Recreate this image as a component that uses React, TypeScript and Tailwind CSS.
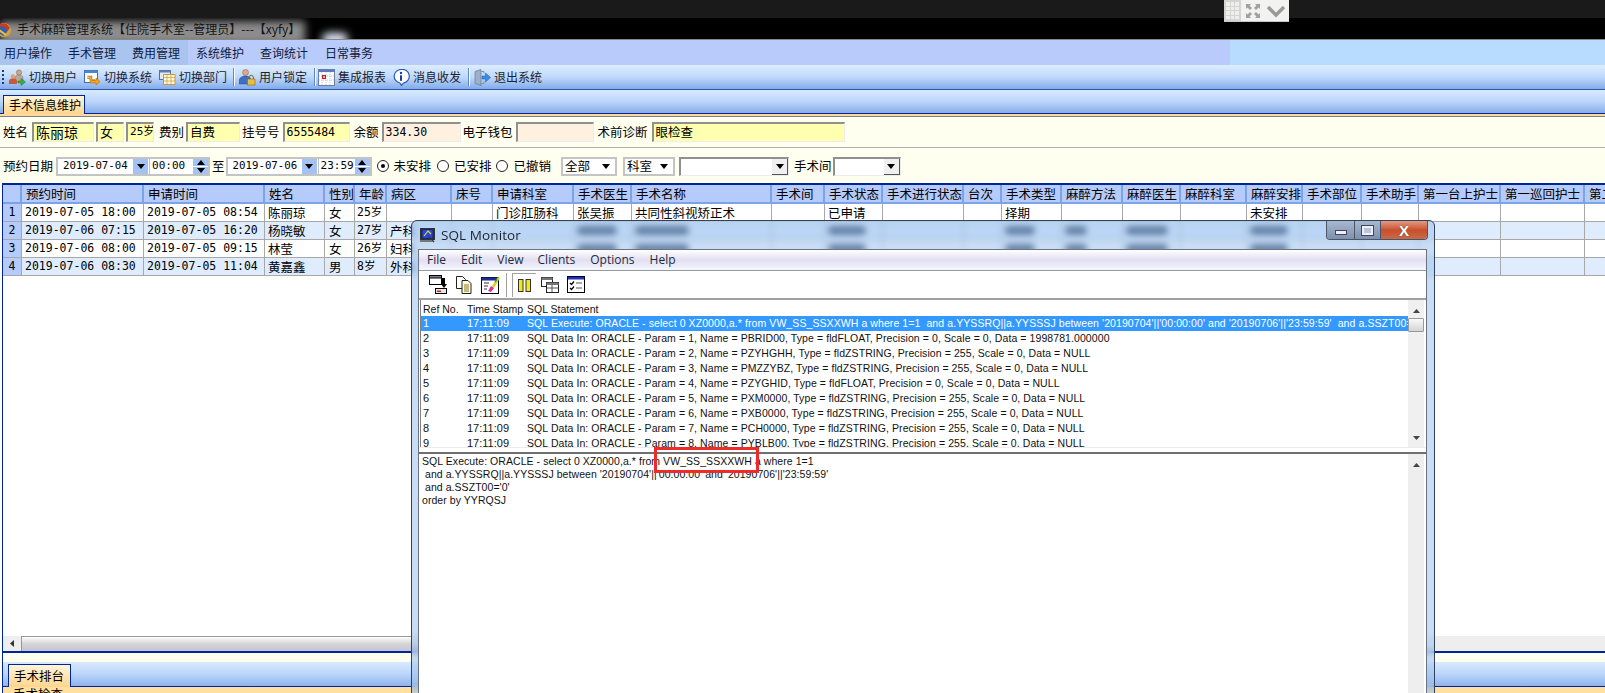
import React from "react";

const cjk = "font-['Noto_Sans_CJK_SC','Liberation_Sans',sans-serif]";
const mono = "font-['DejaVu_Sans_Mono','Noto_Sans_CJK_SC',monospace]";
const cols =
  "grid grid-cols-[19px_122px_121px_60px_30px_32px_65px_41px_81px_58px_140px_53px_58px_81px_38px_60px_61px_58px_66px_56px_59px_57px_82px_84px_60px]";

const headers = ["", "预约时间", "申请时间", "姓名", "性别", "年龄", "病区", "床号", "申请科室", "手术医生", "手术名称", "手术间", "手术状态", "手术进行状态", "台次", "手术类型", "麻醉方法", "麻醉医生", "麻醉科室", "麻醉安排", "手术部位", "手术助手", "第一台上护士", "第一巡回护士", "第二台上护士"];

const rows = [
  { n: "1", a: "2019-07-05 18:00", b: "2019-07-05 08:54", name: "陈丽琼", sex: "女", age: "25岁", ward: "", bg: "bg-white" },
  { n: "2", a: "2019-07-06 07:15", b: "2019-07-05 16:20", name: "杨晓敏", sex: "女", age: "27岁", ward: "产科", bg: "bg-[#deecfd]" },
  { n: "3", a: "2019-07-06 08:00", b: "2019-07-05 09:15", name: "林莹", sex: "女", age: "26岁", ward: "妇科", bg: "bg-white" },
  { n: "4", a: "2019-07-06 08:30", b: "2019-07-05 11:04", name: "黄嘉鑫", sex: "男", age: "8岁", ward: "外科", bg: "bg-[#deecfd]" },
];

const blobs: Record<number, number> = { 9: 40, 10: 54, 12: 38, 15: 30, 16: 22, 17: 42, 19: 38 };

function Cell({ children, className = "" }: { children?: React.ReactNode; className?: string }) {
  return <div className={`h-[18px] border-r border-b border-[#a8a8a8] overflow-hidden whitespace-nowrap pl-[3px] leading-[17px] ${className}`}>{children}</div>;
}

function Row({ r }: { r: (typeof rows)[number] }) {
  const empties = Array.from({ length: 18 }, (_, i) => i + 7);
  return (
    <div className={`${cols} ${r.bg} w-[1700px]`}>
      <Cell className={`bg-[#b5cbfb] text-center !pl-0 ${mono} text-[11.5px]`}>{r.n}</Cell>
      <Cell className={`${mono} text-[11.5px]`}>{r.a}</Cell>
      <Cell className={`${mono} text-[11.5px]`}>{r.b}</Cell>
      <Cell className="text-[12.5px]">{r.name}</Cell>
      <Cell className="text-[12.5px] pl-[4px]">{r.sex}</Cell>
      <Cell className={`${mono} text-[11.5px] !pl-[2px]`}>{r.age}</Cell>
      <Cell className="text-[12.5px]">{r.ward}</Cell>
      {empties.map((i) => {
        if (r.n === "1") {
          const t: Record<number, string> = { 8: "门诊肛肠科", 9: "张吴振", 10: "共同性斜视矫正术", 12: "已申请", 15: "择期", 19: "未安排" };
          return <Cell key={i} className="text-[12.5px]">{t[i]}</Cell>;
        }
        const w = r.n === "2" || r.n === "3" ? blobs[i] : undefined;
        return (
          <Cell key={i}>
            {w ? <div className="mt-[4px] h-[9px] rounded-full bg-[#1f3250]" style={{ width: w }} /> : null}
          </Cell>
        );
      })}
    </div>
  );
}

function Input({ className = "", tone = "bg-[#ffffb0]", children }: { className?: string; tone?: string; children?: React.ReactNode }) {
  return (
    <div className={`h-[20px] border-t-2 border-l-2 border-t-[#909090] border-l-[#909090] border-r border-b border-r-[#ececec] border-b-[#ececec] pl-[2px] leading-[16px] overflow-hidden whitespace-nowrap ${tone} ${className}`}>
      {children}
    </div>
  );
}

function Tri({ up = false, color = "#000" }: { up?: boolean; color?: string }) {
  return (
    <svg width="8" height="5" viewBox="0 0 8 5" className="block">
      <path d={up ? "M4 0L8 5H0z" : "M0 0h8L4 5z"} fill={color} />
    </svg>
  );
}

function DateBox({ d, className }: { d: string; className: string }) {
  return (
    <div className={`h-[19px] border-2 border-r-0 border-[#c4c4c4] bg-white flex items-center pl-[5px] justify-between ${className}`}>
      <span className={`${mono} text-[10.75px]`}>{d}</span>
      <span className="w-[15px] h-[15px] bg-[#a4c2f4] flex items-center justify-center mr-[1px]"><Tri /></span>
    </div>
  );
}

function TimeBox({ t, className }: { t: string; className: string }) {
  return (
    <div className={`h-[19px] border-2 border-l border-[#c4c4c4] bg-white flex items-center pl-[2px] justify-between ${className}`}>
      <span className={`${mono} text-[11px]`}>{t}</span>
      <span className="w-[15px] h-[15px] flex flex-col gap-[1px]">
        <span className="h-[7px] bg-[#a4c2f4] flex items-center justify-center"><Tri up /></span>
        <span className="h-[7px] bg-[#a4c2f4] flex items-center justify-center"><Tri /></span>
      </span>
    </div>
  );
}

function Radio({ on = false }: { on?: boolean }) {
  return (
    <span className="w-[12px] h-[12px] rounded-full border border-[#222] bg-white flex items-center justify-center shrink-0">
      {on ? <span className="w-[4px] h-[4px] rounded-full bg-black" /> : null}
    </span>
  );
}

function SelectBox({ text, className }: { text?: string; className: string }) {
  return (
    <div className={`h-[19px] border-2 border-[#c4c4c4] bg-white flex items-center justify-between pl-[2px] pr-[5px] text-[12.5px] ${className}`}>
      <span>{text}</span>
      <Tri />
    </div>
  );
}

function ComboBox({ className }: { className: string }) {
  return (
    <div className={`h-[19px] border-t-2 border-l-2 border-[#909090] border-r border-b border-r-[#ececec] border-b-[#ececec] bg-white flex justify-end ${className}`}>
      <span className="w-[16px] h-full bg-[#f0f0f0] border-r border-b border-[#555] flex items-center justify-center"><Tri /></span>
    </div>
  );
}

const IconTitle = () => (
  <svg width="13" height="16" viewBox="0 0 13 16" className="shrink-0">
    <circle cx="4" cy="9" r="7" fill="#d9a03a" />
    <path d="M-2 6C2 3 6 4 9 8L4 15-2 12z" fill="#2c5fb8" />
    <path d="M0 3C4 1 8 3 10 7L7 9C5 6 3 5 0 6z" fill="#c83a22" />
    <path d="M-1 9L6 14" stroke="#e8c040" strokeWidth="2" />
  </svg>
);

const I = { w: 17, h: 17, vb: "0 0 17 17" };
const TbUser = () => (
  <svg width={I.w} height={I.h} viewBox={I.vb} className="shrink-0">
    <circle cx="10" cy="3.5" r="2.6" fill="#c9a98a" stroke="#8b6a55" strokeWidth=".6" />
    <path d="M6 13V9c0-2 2-3 4-3s4 1 4 3v3z" fill="#b9a8a0" stroke="#8a7570" strokeWidth=".6" />
    <circle cx="4" cy="7.5" r="2.2" fill="#e0a070" />
    <path d="M0 15v-3c0-2 2-2.5 4-2.5s4 .5 4 2.5v3z" fill="#c8593f" />
    <path d="M9 12h3V9.5l4.5 3.5-4.5 3.500V14H9z" fill="#3caf3c" stroke="#1f7a1f" strokeWidth=".5" />
  </svg>
);
const TbSys = () => (
  <svg width={I.w} height={I.h} viewBox={I.vb} className="shrink-0">
    <rect x=".5" y="1.500" width="13" height="12" fill="#fff" stroke="#3a6fc0" />
    <rect x=".5" y="1.500" width="13" height="2.500" fill="#4a86d8" />
    <path d="M3 7h5v4h3l-2 0M8 11h4v-2l4 3.500-4 3.500v-2H6V9H3z" fill="#f2a11f" stroke="#a8650d" strokeWidth=".5" />
  </svg>
);
const TbDept = () => (
  <svg width={I.w} height={I.h} viewBox={I.vb} className="shrink-0">
    <rect x=".5" y="1.500" width="11" height="9" fill="#dfe8f4" stroke="#5a6f90" />
    <rect x="4.500" y="5.500" width="11.500" height="10" fill="#fff7dc" stroke="#c79b3c" />
    <path d="M4.500 8.500h11.500M8 5.500v10M12 5.500v10M4.500 12h11.500" stroke="#c79b3c" strokeWidth=".7" />
    <rect x=".5" y="1.500" width="11" height="2" fill="#5a7fb5" />
  </svg>
);
const TbLock = () => (
  <svg width={I.w} height={I.h} viewBox={I.vb} className="shrink-0">
    <circle cx="6.500" cy="3.500" r="3" fill="#e0a88a" stroke="#8a5a45" strokeWidth=".5" />
    <path d="M0 15v-3c0-3 3-5 6.500-5S12 9 12 12v3z" fill="#3f6fc2" stroke="#26488a" strokeWidth=".5" />
    <path d="M10 10V8.500a2.200 2.200 0 0 1 4.400 0V10" fill="none" stroke="#7a6a30" />
    <rect x="8.500" y="10" width="7.500" height="6" fill="#e9bd42" stroke="#8a6a18" strokeWidth=".6" />
  </svg>
);
const TbReport = () => (
  <svg width={I.w} height={I.h} viewBox={I.vb} className="shrink-0">
    <rect x=".5" y=".5" width="16" height="16" fill="#fff" stroke="#6a7fa8" />
    <rect x=".5" y=".5" width="16" height="2.500" fill="#5d7db8" />
    <path d="M4 3v13M8 3v13M12 3v13M1 7h15M1 11h15" stroke="#a8b8dc" strokeWidth=".8" strokeDasharray="1 1" />
    <rect x="4" y="6" width="4" height="4" fill="#b8232a" />
    <rect x="5.200" y="7.200" width="1.600" height="1.600" fill="#fff" />
  </svg>
);
const TbInfo = () => (
  <svg width={I.w} height={I.h} viewBox={I.vb} className="shrink-0">
    <path d="M8 .5a7 6.800 0 0 1 2.500 13.500L8.500 16.500 7 14A7 6.800 0 0 1 8 .5z" fill="#fff" stroke="#2a58c0" strokeWidth="1.200" />
    <circle cx="8" cy="4" r="1.200" fill="#123f9c" />
    <rect x="7" y="6.300" width="2" height="5.500" fill="#123f9c" />
  </svg>
);
const TbExit = () => (
  <svg width={I.w} height={I.h} viewBox={I.vb} className="shrink-0">
    <path d="M1 2.500L7 .5v16l-6-2z" fill="#9db0c8" stroke="#5f6f85" strokeWidth=".6" />
    <path d="M7 2.500h3v2M7 14.500h3v-2" fill="none" stroke="#8a8f98" />
    <path d="M8 7h3.500V4l5 4.500-5 4.500v-3H8z" fill="#3b8be6" stroke="#1b59aa" strokeWidth=".5" />
  </svg>
);

function Sep({ className = "" }: { className?: string }) {
  return <span className={`w-[1px] h-[18px] bg-[#5f86bd] border-r border-white box-content ${className}`} />;
}

function Tool({ icon, text, className }: { icon: React.ReactNode; text: string; className: string }) {
  return (
    <div className={`flex items-center gap-[3px] ${className}`}>
      {icon}
      <span>{text}</span>
    </div>
  );
}

const WinIcon = () => (
  <svg width="16" height="15" viewBox="0 0 16 15" className="shrink-0">
    <rect x=".5" y=".5" width="14" height="11" fill="#182a66" stroke="#333" />
    <rect x="2.500" y="2" width="10" height="8" fill="#2b45d6" />
    <path d="M4 8l4-5 3 3" stroke="#e0d040" strokeWidth="1.200" fill="none" />
    <path d="M9 9l5 5" stroke="#333" strokeWidth="1.500" />
    <rect x="0" y="12" width="12" height="2" fill="#777" />
  </svg>
);

const St1 = () => (
  <svg width="19" height="19" viewBox="0 0 19 19" className="shrink-0">
    <rect x=".5" y=".5" width="12" height="9" fill="#fff" stroke="#000" />
    <rect x=".5" y=".5" width="12" height="2.500" fill="#7b7f9a" stroke="#000" />
    <rect x="6.500" y="13.500" width="11" height="5" fill="#e8e8e8" stroke="#000" />
    <rect x="8" y="15.500" width="4" height="1.500" fill="#d02020" />
    <path d="M13 3h3v6h2l-3 4-3-4h1z" fill="#000" />
  </svg>
);
const St2 = () => (
  <svg width="16" height="18" viewBox="0 0 16 18" className="shrink-0">
    <path d="M.5 .5h6l3 3v9h-9z" fill="#fff" stroke="#222" />
    <path d="M6 4.500h6l3 3v10H6z" fill="#fffbe0" stroke="#222" />
    <path d="M8 9h5M8 11h5M8 13h5M8 15h5" stroke="#8a7a20" />
  </svg>
);
const St3 = () => (
  <svg width="19" height="18" viewBox="0 0 19 18" className="shrink-0">
    <rect x=".5" y="1.500" width="17" height="16" fill="#fff" stroke="#000" />
    <rect x=".5" y="1.500" width="17" height="3" fill="#202a90" />
    <path d="M3 7h5M3 10h4M3 13h3" stroke="#333" />
    <path d="M7 15l3-5 3 2-3 4z" fill="#e82aa0" />
    <path d="M11 10l6-9 2 1-6 10z" fill="#d8d020" />
    <path d="M14 6l2-3" stroke="#2aa050" strokeWidth="1.500" />
  </svg>
);
const StPause = () => (
  <svg width="13" height="13" viewBox="0 0 13 13" className="shrink-0">
    <rect x=".5" y=".5" width="4.500" height="12" fill="#f4e814" stroke="#333" />
    <rect x="8" y=".5" width="4.500" height="12" fill="#f4e814" stroke="#333" />
  </svg>
);
const St5 = () => (
  <svg width="18" height="16" viewBox="0 0 18 16" className="shrink-0">
    <rect x=".5" y=".5" width="11" height="9" fill="#fff" stroke="#222" />
    <rect x=".5" y=".5" width="11" height="2.500" fill="#777" />
    <rect x="5.500" y="5.500" width="12" height="10" fill="#fff" stroke="#222" />
    <rect x="5.500" y="5.500" width="12" height="2.500" fill="#777" />
    <path d="M6 11h11M11 8v7" stroke="#555" />
  </svg>
);
const St6 = () => (
  <svg width="18" height="17" viewBox="0 0 18 17" className="shrink-0">
    <rect x=".5" y=".5" width="17" height="16" fill="#fff" stroke="#000" />
    <rect x="1" y="1" width="16" height="2.500" fill="#2030c0" />
    <path d="M3 7l1.500 1.500L7 5.500M3 12l1.500 1.500L7 10.500" stroke="#000" fill="none" strokeWidth="1.200" />
    <path d="M9 7h6M9 12h6" stroke="#555" />
  </svg>
);

const sqlRows: [string, string][] = [
  ["1", "SQL Execute: ORACLE - select 0 XZ0000,a.* from VW_SS_SSXXWH a where 1=1  and a.YYSSRQ||a.YYSSSJ between '20190704'||'00:00:00' and '20190706'||'23:59:59'  and a.SSZT00='0'"],
  ["2", "SQL Data In: ORACLE - Param = 1, Name = PBRID00, Type = fldFLOAT, Precision = 0, Scale = 0, Data = 1998781.000000"],
  ["3", "SQL Data In: ORACLE - Param = 2, Name = PZYHGHH, Type = fldZSTRING, Precision = 255, Scale = 0, Data = NULL"],
  ["4", "SQL Data In: ORACLE - Param = 3, Name = PMZZYBZ, Type = fldZSTRING, Precision = 255, Scale = 0, Data = NULL"],
  ["5", "SQL Data In: ORACLE - Param = 4, Name = PZYGHID, Type = fldFLOAT, Precision = 0, Scale = 0, Data = NULL"],
  ["6", "SQL Data In: ORACLE - Param = 5, Name = PXM0000, Type = fldZSTRING, Precision = 255, Scale = 0, Data = NULL"],
  ["7", "SQL Data In: ORACLE - Param = 6, Name = PXB0000, Type = fldZSTRING, Precision = 255, Scale = 0, Data = NULL"],
  ["8", "SQL Data In: ORACLE - Param = 7, Name = PCH0000, Type = fldZSTRING, Precision = 255, Scale = 0, Data = NULL"],
  ["9", "SQL Data In: ORACLE - Param = 8, Name = PYBLB00, Type = fldZSTRING, Precision = 255, Scale = 0, Data = NULL"],
];

function Menu() {
  return (
    <div className="h-[21px] flex items-center text-[12px] text-[#1c2a40] font-['Open_Sans',sans-serif] bg-linear-to-b from-white via-[#e2dff2] to-[#f4f8ff] border-b border-[#999]">
      <span className="ml-[8px]">File</span>
      <span className="ml-[15px]">Edit</span>
      <span className="ml-[15px]">View</span>
      <span className="ml-[14px]">Clients</span>
      <span className="ml-[15px]">Options</span>
      <span className="ml-[15px]">Help</span>
    </div>
  );
}

function ScrollArrow({ up = false }: { up?: boolean }) {
  return (
    <svg width="7" height="4" viewBox="0 0 7 4" className="block mx-auto">
      <path d={up ? "M3.500 0L7 4H0z" : "M0 0h7L3.500 4z"} fill="#444" />
    </svg>
  );
}

function SqlWindow() {
  return (
    <div className="absolute left-[411px] top-[220px] w-[1024px] h-[490px] rounded-t-[6px] border border-[#33405a] bg-[#9cc2ee]/55 backdrop-blur-[3px] flex flex-col">
      <div className="h-[28px] shrink-0 relative flex items-center pl-[8px] gap-[5px]">
        <WinIcon />
        <span className="text-[13.500px] text-[#1b2230] font-['Open_Sans',sans-serif] tracking-[0.1px]">SQL Monitor</span>
        <div className="absolute right-[6px] top-0 h-[19px] w-[102px] flex border border-t-0 border-[#4a5568] rounded-b-[4px] overflow-hidden">
          <div className="w-[28px] bg-linear-to-b from-[#a8b8d0] to-[#7d90ae] border-r border-[#4a5568] flex items-center justify-center">
            <span className="w-[12px] h-[5px] mt-[4px] bg-[#eef] border border-[#445]" />
          </div>
          <div className="w-[26px] bg-linear-to-b from-[#a8b8d0] to-[#7d90ae] border-r border-[#4a5568] flex items-center justify-center">
            <span className="w-[11px] h-[9px] bg-[#b8c8dc] border-2 border-[#eef] outline outline-[#445]" />
          </div>
          <div className="flex-1 bg-linear-to-b from-[#e39a84] via-[#c8502a] to-[#c66a48] flex items-center justify-center">
            <span className="text-white text-[15px] font-bold leading-none font-['Liberation_Sans',sans-serif] [text-shadow:0_0_1px_#333]">X</span>
          </div>
        </div>
      </div>
      <div className="ml-[6px] mr-[7px] flex-1 bg-white border-t border-x border-[#6b7280] flex flex-col min-h-0">
        <Menu />
        <div className="h-[29px] shrink-0 flex items-center relative border-b-2 border-[#a0a0a0]">
          <span className="ml-[10px]"><St1 /></span>
          <span className="ml-[8px]"><St2 /></span>
          <span className="ml-[9px]"><St3 /></span>
          <span className="ml-[6px] w-[2px] h-[24px] border-l border-[#a0a0a0] border-r border-r-white" />
          <span className="ml-[4px] w-[24px] h-[24px] border-t border-l border-[#a0a0a0] flex items-center justify-center"><StPause /></span>
          <span className="ml-[5px]"><St5 /></span>
          <span className="ml-[8px]"><St6 /></span>
        </div>
        <div className="h-[147px] shrink-0 relative overflow-hidden ml-[1px] border-l border-[#808080] font-['Liberation_Sans',sans-serif] text-[10.500px] text-[#111]">
          <div className="h-[16px] flex items-end pb-[1px] pl-[2px] leading-[12px]">
            <span className="w-[44px]">Ref No.</span>
            <span className="w-[60px]">Time Stamp</span>
            <span>SQL Statement</span>
          </div>
          {sqlRows.map(([n, t]) => (
            <div key={n} className={`h-[15px] w-[988px] flex items-center pl-[2px] overflow-hidden whitespace-pre ${n === "1" ? "bg-[#3399ff] text-white" : ""}`}>
              <span className="w-[44px] shrink-0 text-[11px]">{n}</span>
              <span className="w-[60px] shrink-0 text-[11px]">17:11:09</span>
              <span className="text-[10.500px] tracking-[0.085px]">{t}</span>
            </div>
          ))}
          <div className="absolute right-[2px] top-[0] bottom-0 w-[16px] bg-[#f0f0f0] pt-[9px] flex flex-col">
            <ScrollArrow up />
            <div className="h-[14px] mt-[5px] bg-linear-to-b from-[#fafafa] to-[#d4d4d4] border border-[#999] rounded-[1px]" />
            <div className="mt-auto mb-[7px]"><ScrollArrow /></div>
          </div>
        </div>
        <div className="h-[7px] shrink-0 border-t border-[#ececec] border-b-2 border-b-[#707070]" />
        <div className="flex-1 relative font-['Liberation_Sans',sans-serif] text-[10.500px] text-[#111] pl-[3px] pt-[1px] leading-[13px] tracking-[0.06px] whitespace-pre">
          <div>SQL Execute: ORACLE - select 0 XZ0000,a.* from VW_SS_SSXXWH a where 1=1</div>
          <div> and a.YYSSRQ||a.YYSSSJ between '20190704'||'00:00:00' and '20190706'||'23:59:59'</div>
          <div> and a.SSZT00='0'</div>
          <div>order by YYRQSJ</div>
          <div className="absolute right-[2px] top-0 bottom-0 w-[16px] bg-[#eeeeee] pt-[9px]">
            <ScrollArrow up />
          </div>
        </div>
      </div>
    </div>
  );
}

export default function App() {
  return (
    <div className={`relative w-[1605px] h-[693px] overflow-hidden bg-white text-black flex flex-col ${cjk} text-[12px]`}>
      <div className="h-[18px] shrink-0 bg-[#1a1a1a]" />
      <div className="h-[22px] shrink-0 bg-black relative overflow-hidden border-b border-[#888] flex items-center">
        <div className="absolute left-0 top-[3px] w-[305px] h-[24px] bg-[#8c8c8c] blur-[4px]" />
        <div className="absolute left-[322px] top-[15px] w-[26px] h-[12px] rounded-full bg-[#e8f0ff] blur-[4px]" />
        <div className="relative flex items-center">
          <IconTitle />
          <span className="ml-[4px] text-[12px] text-[#141414] whitespace-nowrap">手术麻醉管理系统【住院手术室--管理员】---【xyfy】</span>
        </div>
      </div>
      <div className="h-[25px] shrink-0 bg-[#b8dcff] relative flex items-center text-[12px] text-[#10203a]">
        <div className="absolute left-0 top-0 bottom-0 w-[1230px] bg-[#b8cbfb]" />
        <div className="absolute left-0 top-0 bottom-0 w-[188px] bg-[#a9c5ef]" />
        <span className="relative ml-[4px]">用户操作</span>
        <span className="relative ml-[16px]">手术管理</span>
        <span className="relative ml-[16px]">费用管理</span>
        <span className="relative ml-[16px]">系统维护</span>
        <span className="relative ml-[16px]">查询统计</span>
        <span className="relative ml-[17px]">日常事务</span>
      </div>
      <div className="h-[25px] shrink-0 bg-linear-to-b from-[#dcedff] via-[#c0d9fc] to-[#82abe9] border-b border-[#2c5aa8] flex items-center text-[12px] text-[#1a2230]">
        <span className="ml-[2px] w-[2px] h-[14px] border-l-2 border-dotted border-[#1e3a70]" />
        <Tool icon={<TbUser />} text="切换用户" className="ml-[5px]" />
        <Tool icon={<TbSys />} text="切换系统" className="ml-[7px]" />
        <Tool icon={<TbDept />} text="切换部门" className="ml-[7px]" />
        <Sep className="ml-[6px]" />
        <Tool icon={<TbLock />} text="用户锁定" className="ml-[4px]" />
        <Sep className="ml-[7px]" />
        <Tool icon={<TbReport />} text="集成报表" className="ml-[2px]" />
        <Tool icon={<TbInfo />} text="消息收发" className="ml-[7px]" />
        <Sep className="ml-[7px]" />
        <Tool icon={<TbExit />} text="退出系统" className="ml-[4px]" />
      </div>
      <div className="h-[24px] shrink-0 bg-linear-to-b from-[#d8eaff] via-[#bcd5fb] to-[#86aeea] border-b border-[#00249c] flex items-end pl-[3px]">
        <div className="w-[82px] h-[19px] -mb-[1px] border border-b-0 border-[#00249c] bg-linear-to-b from-[#fff6d8] to-[#ffd48c] flex items-center pl-[5px] text-[12px]">手术信息维护</div>
      </div>
      <div className="h-[3px] shrink-0 bg-[#ffd9a0] border-b border-[#808080]" />
      <div className="h-[31px] shrink-0 bg-[#fffff0] border-b border-[#b0b0b0] flex items-center text-[12.500px] pl-[3px]">
        <span>姓名</span>
        <Input className="ml-[4px] w-[62px] text-[14px]">陈丽琼</Input>
        <Input className="ml-[2px] w-[28px] text-[13px]">女</Input>
        <Input className={`ml-[2px] w-[28px] text-[11px] ${mono}`}>25岁</Input>
        <span className="ml-[5px]">费别</span>
        <Input className="ml-[2px] w-[54px] text-[12.500px]">自费</Input>
        <span className="ml-[2px]">挂号号</span>
        <Input className={`ml-[3px] w-[67px] text-[11.500px] ${mono}`}>6555484</Input>
        <span className="ml-[4px]">余额</span>
        <Input tone="bg-[#fff0e0]" className={`ml-[3px] w-[79px] text-[11.500px] ${mono}`}>334.30</Input>
        <span className="ml-[2px]">电子钱包</span>
        <Input tone="bg-[#fff0e0]" className="ml-[3px] w-[78px]" />
        <span className="ml-[4px]">术前诊断</span>
        <Input className="ml-[4px] w-[193px] text-[12.500px]">眼检查</Input>
      </div>
      <div className="h-[35px] shrink-0 bg-[#fffff0] flex items-center text-[12.500px] pl-[3px] pt-[1px]">
        <span>预约日期</span>
        <DateBox d="2019-07-04" className="ml-[3px] w-[93px]" />
        <TimeBox t="00:00" className="w-[61px]" />
        <span className="ml-[2px]">至</span>
        <DateBox d="2019-07-06" className="ml-[1px] w-[92px]" />
        <TimeBox t="23:59" className="w-[54px]" />
        <span className="ml-[5px]"><Radio on /></span>
        <span className="ml-[5px]">未安排</span>
        <span className="ml-[6px]"><Radio /></span>
        <span className="ml-[5px]">已安排</span>
        <span className="ml-[4px]"><Radio /></span>
        <span className="ml-[6px]">已撤销</span>
        <SelectBox text="全部" className="ml-[10px] w-[56px]" />
        <SelectBox text="科室" className="ml-[6px] w-[52px]" />
        <ComboBox className="ml-[4px] w-[110px]" />
        <span className="ml-[5px]">手术间</span>
        <ComboBox className="ml-[1px] w-[68px]" />
      </div>
      <div className="flex-1 min-h-0 ml-[2px] border-l border-[#00249c] flex flex-col">
        <div className="h-[470px] shrink-0 border-t-[2px] border-t-[#00249c] border-b-[2px] border-b-[#00249c] flex flex-col overflow-hidden bg-white">
          <div className={`${cols} w-[1700px] h-[19px] shrink-0 bg-[#b5cbfb] border-b-[2px] border-[#7ba4e8]`}>
            {headers.map((h, i) => (
              <div key={i} className="border-r-2 border-[#7ba4e8] h-[17px] leading-[17px] text-[12.500px] pl-[4px] overflow-hidden whitespace-nowrap">{h}</div>
            ))}
          </div>
          {rows.map((r) => <Row key={r.n} r={r} />)}
          <div className="flex-1" />
          <div className="h-[15px] shrink-0 flex bg-[#eeeeee]">
            <div className="w-[18px] flex items-center justify-center">
              <svg width="4" height="7" viewBox="0 0 4 7"><path d="M4 0v7L0 3.500z" fill="#333" /></svg>
            </div>
            <div className="w-[1400px] bg-linear-to-b from-white via-[#d4d4d4] to-[#c4c4d8] border-t border-l border-[#999]" />
          </div>
        </div>
        <div className="h-[9px] shrink-0 bg-[#fffff0]" />
        <div className="h-[25px] shrink-0 bg-linear-to-b from-[#d8eaff] via-[#bcd5fb] to-[#8fb4ec] border-b border-[#00249c] flex items-end pl-[5px]">
          <div className="w-[63px] h-[23px] -mb-[1px] border border-b-0 border-[#00249c] bg-linear-to-b from-[#fff6d8] to-[#ffd48c] flex items-center pl-[5px] text-[12.500px]">手术排台</div>
        </div>
        <div className="flex-1 bg-[#ffe0a0] overflow-hidden pl-[10px] text-[12.500px] leading-[14px]">手术检查</div>
      </div>

      <SqlWindow />

      <div className="absolute left-[654px] top-[447px] w-[105px] h-[26px] border-[3px] border-[#ee2a2a] bg-transparent" />

      <div className="absolute left-[1224px] top-0 w-[65px] h-[22px] bg-[#f2f2f0] border-b border-[#c8c8c8] flex items-center">
        <div className="w-[17px] h-full bg-[#d4d4d2] grid grid-cols-3 grid-rows-4 gap-[1px] p-[2px]">
          {Array.from({ length: 12 }).map((_, i) => <span key={i} className="bg-[#eeeeec]" />)}
        </div>
        <svg width="16" height="16" viewBox="0 0 16 16" className="ml-[4px]">
          <path d="M1 6V1h5L4.500 2.500l2.500 2.500-2 2L2.500 4.500zM15 6V1h-5l1.500 1.500L9 5l2 2 2.500-2.500zM1 10v5h5l-1.500-1.500L7 11 5 9l-2.500 2.500zM15 10v5h-5l1.500-1.500L9 11l2-2 2.500 2.500z" fill="#a0a0a0" />
        </svg>
        <svg width="20" height="14" viewBox="0 0 20 14" className="ml-[5px]">
          <path d="M2 3l8 8 8-8" stroke="#9a9a9a" strokeWidth="3.500" fill="none" />
        </svg>
      </div>
    </div>
  );
}
